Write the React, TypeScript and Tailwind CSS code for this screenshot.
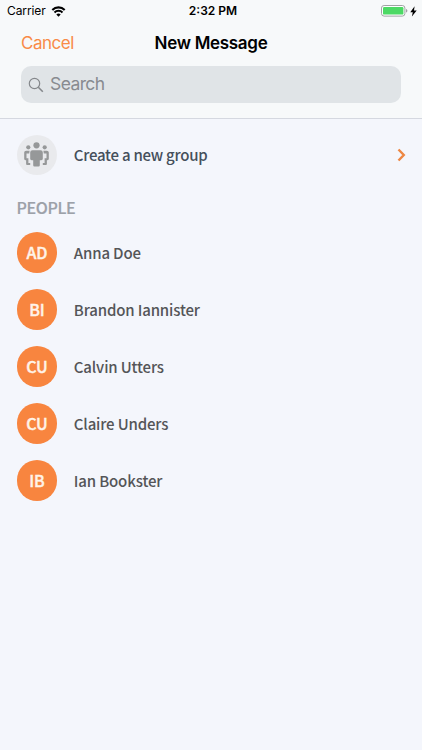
import React from "react";

const people = [
  { initials: "AD", name: "Anna Doe" },
  { initials: "BI", name: "Brandon Iannister" },
  { initials: "CU", name: "Calvin Utters" },
  { initials: "CU", name: "Claire Unders" },
  { initials: "IB", name: "Ian Bookster" },
];

const StatusBar = () => {
  return (
    <div className="grid h-[22px] grid-cols-3 items-center pl-[7px] pr-[5px] text-[12px] leading-[22px] text-black">
      <div className="flex items-center gap-[5px]">
        <span className="tracking-[-0.1px]">Carrier</span>
        <svg width="15" height="11" viewBox="0 0 14 11" fill="none" stroke="#000">
          <path d="M0.8 3.9a8.9 8.9 0 0 1 12.4 0" strokeWidth="2.1" />
          <path d="M3 6.5a5.7 5.7 0 0 1 8 0" strokeWidth="2" />
          <path d="M7 10.7 4.8 8.5a3.1 3.1 0 0 1 4.4 0z" fill="#000" stroke="none" />
        </svg>
      </div>
      <span className="pl-[2px] text-center font-semibold">2:32 PM</span>
      <div className="flex items-center justify-end gap-[2px]">
        <svg width="27" height="12" viewBox="0 0 27 12">
          <rect x="0.5" y="0.5" width="23.4" height="10.6" rx="2.6" fill="#fff" stroke="#a0a2a3" />
          <rect x="2" y="2" width="20.4" height="7.6" rx="1.2" fill="#4cd964" />
          <path d="M25 4v3.6c1-.3 1.4-1 1.4-1.8S26 4.3 25 4z" fill="#a0a2a3" />
        </svg>
        <svg width="7" height="11" viewBox="0 0 7 11">
          <path d="M4.6 0.3 0.3 6.2h2.5L1.9 10.6 6.7 4.4H4z" fill="#000" />
        </svg>
      </div>
    </div>
  );
};

const GroupIcon = () => {
  return (
    <svg width="26" height="26" viewBox="0 0 26 26" fill="#969899">
      <circle cx="12.5" cy="3.3" r="3.1" />
      <circle cx="4.3" cy="5.3" r="2.1" />
      <circle cx="20.7" cy="5.3" r="2.1" />
      <path d="M8.5 8.2h8a2.3 2.3 0 0 1 2.3 2.3v6.3c0 .9-.6 1.4-1.5 1.4h-1.500v5a1.2 1.2 0 0 1-1.2 1.2h-4.2a1.2 1.2 0 0 1-1.200-1.200v-5H7.700c-.9 0-1.500-.5-1.500-1.400v-6.300a2.300 2.300 0 0 1 2.300-2.300z" />
      <path d="M5.600 8.700H2.100C1 8.700.2 9.500.2 10.600v6.200c0 .9.5 1.400 1.400 1.400h.5v3.600c0 .8.500 1.300 1.300 1.300h2.800v-2.200H4.400v-4.700H2.500v-4.800h2.700z" />
      <path d="M19.400 8.700h3.500c1.100 0 1.900.8 1.900 1.900v6.200c0 .9-.5 1.400-1.400 1.400h-.5v3.600c0 .8-.5 1.300-1.300 1.300h-2.800v-2.200h1.800v-4.700h1.900v-4.800h-2.700z" />
    </svg>
  );
};

const App = () => {
  return (
    <div className="h-[750px] w-full overflow-hidden bg-[#f4f6fc] font-['Inter','Liberation_Sans',sans-serif]">
      {/* Header */}
      <header className="h-[119px] border-b border-[#d5d8e0] bg-[#f7f9fa]">
        <StatusBar />
        <div className="grid h-[44px] grid-cols-3 items-center px-[21px] text-[17px]">
          <button className="text-left text-[#f98b47] tracking-[-0.5px]">Cancel</button>
          <h1 className="whitespace-nowrap text-center font-semibold text-black tracking-[-0.3px]">
            New Message
          </h1>
        </div>
        <div className="mx-[21px] flex h-[37px] items-center gap-[6px] rounded-[10px] bg-[#e0e4e7] pl-[7px] text-[17.5px] text-[#888b90]">
          <svg width="16" height="16" viewBox="0 0 16 16" fill="none" stroke="#85888c">
            <circle cx="6.5" cy="6.5" r="5.2" strokeWidth="1.2" />
            <path d="m10.3 10.3 4.500 4.500" strokeWidth="1.6" />
          </svg>
          <span className="tracking-[-0.6px]">Search</span>
        </div>
      </header>

      {/* Contacts */}
      <main className="pl-[16.6px] pr-[17px] pt-[16px] font-['Noto_Sans_CJK_SC',sans-serif] text-[15px] font-medium text-[#545558]">
        <div className="flex h-[41px] items-center">
          <div className="mb-px flex size-[40.6px] items-center justify-center rounded-full bg-[#e9eaed]">
            <GroupIcon />
          </div>
          <span className="ml-[16.6px] tracking-[-0.25px] text-[#454f5b]">Create a new group</span>
          <svg className="-mr-px mb-px ml-auto" width="9" height="14" viewBox="0 0 9 14" fill="none" stroke="#ed8744">
            <path d="m1.500 1.500 5.300 5.500-5.300 5.500" strokeWidth="2.4" />
          </svg>
        </div>
        <h2 className="mt-[19px] h-[25px] text-[16px] leading-[25px] tracking-[-0.4px] text-[#9ca1a9] [-webkit-text-stroke:0.2px]">
          PEOPLE
        </h2>
        <ul className="mt-[12px] flex flex-col gap-[16px]">
          {people.map((person) => (
            <li key={person.name} className="flex h-[41px] items-center">
              <div className="flex size-[40.6px] items-center justify-center rounded-full bg-[#f8853f] pb-[2px] text-[16px] tracking-[-0.2px] text-[#fff3e8] [-webkit-text-stroke:0.4px]">
                {person.initials}
              </div>
              <span className="ml-[16.6px] pt-[2px] tracking-[-0.15px]">{person.name}</span>
            </li>
          ))}
        </ul>
      </main>
    </div>
  );
};

export default App;
